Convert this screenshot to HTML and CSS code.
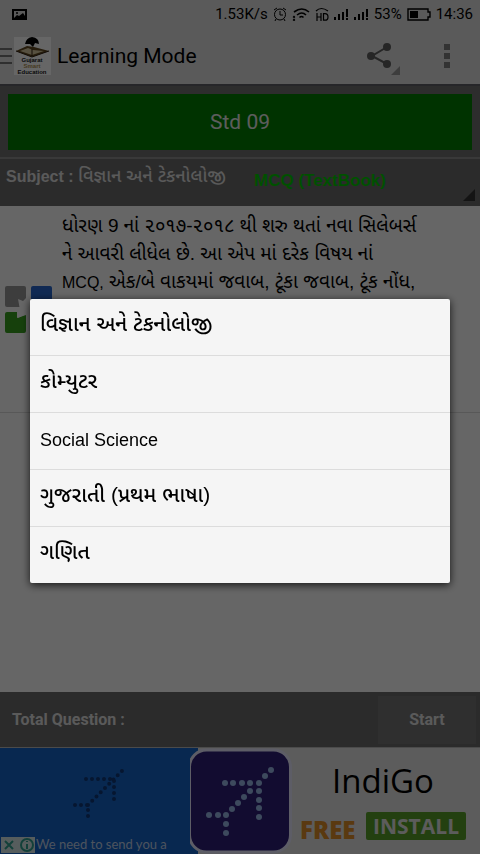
FILE: index.html
```html
<!doctype html>
<html lang="gu">
  <head>
    <meta charset="utf-8">
    <meta name="viewport" content="width=device-width, initial-scale=1">
    <title>Learning Mode</title>
    <link rel="stylesheet" href="styles.css">
  </head>
  <body>
    <div class="statusbar">
      <svg class="picture" width="15" height="13" viewBox="0 0 15 13">
        <path fill-rule="evenodd" d="M0 1h15v11H0zM2 3v7l3-3 2 1 4-3 2 3V3z"/>
        <circle cx="5" cy="5" r="1"/>
      </svg>
      <div class="indicators">
        <span>1.53K/s</span>
        <svg width="14" height="14" viewBox="0 0 14 14" fill="none" stroke="#000">
          <circle cx="7" cy="7.500" r="5.500"/>
          <path d="M7 4v4h3M1 3l3-2M13 3l-3-2M3 12l-1 2M11 12l1 2"/>
        </svg>
        <svg width="18" height="14" viewBox="0 0 18 14" fill="none" stroke="#000" stroke-width="1.600">
          <path d="M2 5q8-6 15 0M5 8q5-4 9 0M7.500 10.500q2-2 4 0"/>
          <circle cx="2" cy="10" r=".4"/>
          <circle cx="2" cy="13" r=".4"/>
        </svg>
        <svg width="14" height="14" viewBox="0 0 14 14" fill="none" stroke="#000" stroke-width="1.200">
          <path d="M1 4q5-5 12 0M2 6v8M6 6v8M2 10h4M8.500 6.600h1.500q3 0 3 3.300t-3 3.300H8.500z"/>
        </svg>
        <svg width="15" height="14" viewBox="0 0 15 14">
          <path d="M0 10h2v3H0zM4 7h2v6H4zM8 5h2v8H8zM12 2h2v8h-2zM12 11h2v2h-2z"/>
        </svg>
        <svg width="15" height="14" viewBox="0 0 15 14">
          <path d="M0 10h2v3H0zM4 7h2v6H4zM8 5h2v8H8zM12 2h2v8h-2zM12 11h2v2h-2z"/>
        </svg>
        <span>53%</span>
        <svg width="24" height="14" viewBox="0 0 24 14">
          <path d="M1 2h20v3h2v5h-2v3H1z" fill="none" stroke="#000" stroke-width="1.400"/>
          <path d="M3 4h8v7H3z"/>
        </svg>
        <span>14:36</span>
      </div>
    </div>

    <header class="appbar">
      <button class="drawer" aria-label="Menu"><i></i><i></i><i></i></button>
      <svg class="logo" width="37" height="38" viewBox="0 0 37 38">
        <path fill="#fff" d="M0 0h37v38H0z"/>
        <path d="M11 7q1-6 7-7 7 1 7 7l-4-1-2 4-3-3z"/>
        <path fill="#604820" d="M2 14l11-5 7 1 15 4-17 6z"/>
        <path fill="#d8c8a0" d="M6 14l8-3 5 2 11 1-12 4z"/>
        <path fill="none" stroke="#302010" d="M2 14l16 6 17-6M18 12v7"/>
        <text x="18" y="25" fill="#202020">Gujarat</text>
        <text x="18" y="31" fill="#b09050">Smart</text>
        <text x="18" y="37" fill="#181818">Education</text>
      </svg>
      <h1>Learning Mode</h1>
      <button class="share" aria-label="Share">
        <svg width="34" height="34" viewBox="0 0 34 34" fill="#606060">
          <path d="M21 6L6 15l15 8" fill="none" stroke="#606060" stroke-width="2"/>
          <circle cx="21" cy="6" r="4"/>
          <circle cx="5" cy="15" r="4"/>
          <circle cx="21" cy="23" r="4"/>
          <path fill="#999" d="M34 25v9h-9z"/>
        </svg>
      </button>
      <button class="more" aria-label="More options">
        <svg width="6" height="26" viewBox="0 0 6 26" fill="#808080">
          <path d="M0 1h6v6H0zM0 10h6v6H0zM0 19h6v6H0z"/>
        </svg>
      </button>
    </header>

    <div class="standard">
      <button>Std 09</button>
    </div>

    <div class="subject">
      <span>Subject : <span class="gu">વિજ્ઞાન અને ટેકનોલોજી</span></span>
      <select aria-label="Question type">
        <option>MCQ (TextBook)</option>
      </select>
    </div>

    <main>
      <article class="note">
        <svg width="48" height="48" viewBox="0 0 48 48">
          <rect x="1" y="1" width="21" height="21" rx="2" fill="#999"/>
          <rect x="27" y="1" width="21" height="21" rx="2" fill="#2868d0"/>
          <path d="M3 27h10v6l9-3v16q0 2-2 2H3q-2 0-2-2V29q0-2 2-2z" fill="#38a020"/>
          <path d="M14 14l5 2 3-3v16l-8 4 2-8z" fill="#fff"/>
        </svg>
        <p>ધોરણ 9 નાં ૨૦૧૭-૨૦૧૮ થી શરુ થતાં નવા સિલેબર્સ ને આવરી લીધેલ છે. આ એપ માં દરેક વિષય નાં <span class="latin">MCQ,</span> એક/બે વાકયમાં જવાબ, ટૂંકા જવાબ, ટૂંક નોંધ, વૈજ્ઞાનિક કારણો વિગેરે</p>
      </article>
    </main>

    <div class="total">
      <span>Total Question :</span>
      <button>Start</button>
    </div>

    <aside class="ad">
      <div class="ad-banner">
        <svg class="ad-plane" width="56" height="56" viewBox="0 0 56 56">
          <path class="dots" d="M3 39h13v13M16 39L52 3M14 13h28v26"/>
        </svg>
        <span>We need to send you a</span>
        <div class="adchoices">
          <svg width="34" height="16" viewBox="0 0 34 16" fill="none" stroke="#30a090" stroke-width="2">
            <path d="M4 4l8 8M12 4l-8 8"/>
            <circle cx="26" cy="8" r="6"/>
            <path d="M26 7v5M26 4v1"/>
          </svg>
        </div>
      </div>
      <svg class="ad-icon" width="104" height="106" viewBox="0 0 104 106">
        <rect x="1.500" y="2" width="101" height="102" rx="17" fill="#2d1e78" stroke="#e8e8ff" stroke-width="3"/>
        <g fill="#98b8e8">
          <circle cx="83" cy="22" r="3"/><circle cx="77" cy="28" r="3"/><circle cx="71" cy="35" r="3"/>
          <circle cx="62" cy="35" r="3"/><circle cx="54" cy="35" r="3"/><circle cx="45" cy="35" r="3"/><circle cx="37" cy="35" r="3"/>
          <circle cx="71" cy="43" r="3"/><circle cx="71" cy="52" r="3"/><circle cx="71" cy="60" r="3"/><circle cx="71" cy="69" r="3"/>
          <circle cx="62" cy="43" r="3"/><circle cx="56" cy="49" r="3"/><circle cx="50" cy="55" r="3"/><circle cx="44" cy="61" r="3"/>
          <circle cx="38" cy="67" r="3"/><circle cx="30" cy="67" r="3"/><circle cx="21" cy="67" r="3"/>
          <circle cx="38" cy="76" r="3"/><circle cx="38" cy="85" r="3"/>
        </g>
      </svg>
      <div class="ad-copy">
        <strong>IndiGo</strong>
        <div class="ad-action">
          <b>FREE</b>
          <a href="#install">INSTALL</a>
        </div>
      </div>
    </aside>

    <div class="scrim">
      <ul class="popup">
        <li><button>વિજ્ઞાન અને ટેકનોલોજી</button></li>
        <li><button>કોમ્યુટર</button></li>
        <li><button class="latin">Social Science</button></li>
        <li><button>ગુજરાતી (પ્રથમ ભાષા)</button></li>
        <li><button>ગણિત</button></li>
      </ul>
    </div>
  </body>
</html>
```

FILE: styles.css
```css
* { box-sizing: border-box; }
html, body { margin: 0; padding: 0; }
body { display: flex; flex-direction: column; min-height: 100vh; background: #fff; color: #000; font-family: Roboto, "Noto Sans Gujarati", "Noto Sans", sans-serif; font-size: 18px; }
button, select { border: 0; padding: 0; background: none; color: inherit; font: inherit; }
svg { display: block; flex: none; }

.statusbar { display: flex; align-items: center; justify-content: space-between; height: 28px; padding: 0 7px 0 12px; background: #e1e1e1; font-size: 15px; }
.indicators { display: flex; align-items: center; gap: 5px; }

.appbar { display: flex; align-items: center; height: 58px; background: #e1e1e1; border-bottom: 2px solid #606068; }
.drawer { display: flex; flex-direction: column; gap: 5px; width: 14px; }
.drawer i { width: 12px; height: 2px; background: #777; }
.logo text { font: bold 6px "Liberation Sans", sans-serif; text-anchor: middle; }
.appbar h1 { flex: 1; margin: 0; padding-left: 6px; font-size: 21px; font-weight: 400; }
.share { padding-top: 4px; }
.more { width: 80px; padding-left: 44px; }

.standard { padding: 8px 8px 7px; background: #707070; border-bottom: 2px solid #909090; }
.standard button { width: 100%; height: 56px; background: #008000; color: #e8e8e8; font-size: 21px; }

.subject { position: relative; display: flex; height: 47px; padding: 0 6px; background: #6c6c6c; color: #e0e0e0; font-family: "Liberation Sans", "Noto Sans Gujarati", sans-serif; font-size: 16px; font-weight: 700; }
.subject > span { width: 248px; line-height: 34px; white-space: nowrap; }
.subject .gu { font-size: 18px; font-weight: 500; }
.subject select { flex: 1; height: 42px; appearance: none; color: #00c800; font-size: 17px; }
.subject::after { content: ""; position: absolute; right: 5px; bottom: 5px; border: 6px solid #333; border-top-color: transparent; border-left-color: transparent; }

main { flex: 1; }
.note { display: flex; align-items: center; height: 207px; padding: 0 62px 0 4px; border-bottom: 1px solid #ddd; overflow: hidden; }
.note p { flex: 1; align-self: flex-start; margin: 0; padding: 6px 0 0 10px; font-family: "Liberation Sans", "Noto Sans Gujarati", sans-serif; font-size: 19px; line-height: 28px; }
.note .latin { font-size: 16px; }

.total { display: flex; align-items: center; justify-content: space-between; height: 56px; padding: 0 4px 0 12px; background: #6c6c6c; color: #e0e0e0; font-size: 16px; font-weight: 700; border-bottom: 1px solid #bbb; }
.total button { width: 98px; height: 48px; background: #777; }

.ad { display: flex; height: 106px; background: #e6e6e6; }
.ad-banner { position: relative; flex: 1; background: #1464c8; overflow: hidden; }
.ad-plane { margin: 18px 0 0 72px; }
.dots { fill: none; stroke: #103878; stroke-width: 4; stroke-linecap: round; stroke-dasharray: 0 6; }
.ad-banner span { position: absolute; left: 36px; bottom: 1px; color: #c0d0e8; font: 13px/18px Lato, sans-serif; white-space: nowrap; }
.adchoices { position: absolute; left: 1px; bottom: 1px; background: #d8e8e8; }
.ad-icon { margin-left: -2px; background: linear-gradient(90deg, #1464c8 10px, #e6e6e6 10px); }
.ad-copy { display: flex; flex-direction: column; width: 188px; padding: 10px 14px 0 8px; }
.ad-copy strong { text-align: center; font: 33px/46px "Open Sans", sans-serif; }
.ad-action { display: flex; justify-content: space-between; font: 700 24px/28px "Open Sans", sans-serif; }
.ad-action b { padding-top: 12px; color: #e09028; }
.ad-action a { padding: 0 7px; height: 28px; margin-top: 8px; border-radius: 2px; background: #58a028; color: #e6e6e6; font-size: 21px; text-decoration: none; }

.scrim { position: fixed; inset: 0; display: flex; align-items: center; justify-content: center; padding: 28px 30px 0; background: rgba(0, 0, 0, .6); }
.popup { width: 100%; margin: 0; padding: 0; list-style: none; background: #f5f5f5; border-radius: 2px; box-shadow: 0 2px 8px rgba(0, 0, 0, .8); }
.popup li + li { border-top: 1px solid #dcdcdc; }
.popup button { display: block; width: 100%; height: 56px; padding: 0 10px 2px; text-align: left; font-family: "Liberation Sans", "Noto Sans Gujarati", sans-serif; font-size: 21px; font-weight: 500; }
.popup .latin { font-size: 18px; }
```
